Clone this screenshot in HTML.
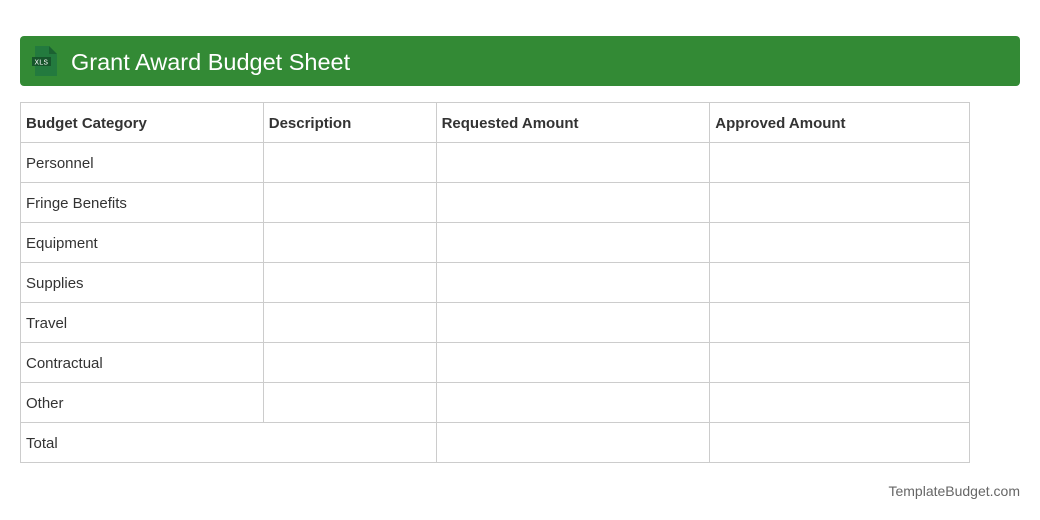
<!DOCTYPE html>
<html><head><style>
body{margin:0;width:1040px;height:520px;background:#fff;font-family:"Liberation Sans",Roboto,sans-serif;position:relative;overflow:hidden}
.hdr{position:absolute;left:20px;top:36px;width:1000px;height:50px;background:#338a35;border-radius:4px}
.hdr .t{position:absolute;left:51px;top:12px;color:#fff;font-size:23.5px;line-height:28px}
table{position:absolute;left:20px;top:102px;border-collapse:collapse;width:950px;font-size:15px;color:#333}
td{border:1px solid #ccc;height:40px;padding:2px 0 0 5px;box-sizing:border-box}
tr:first-child td{font-weight:bold}
.ft{position:absolute;right:20px;top:483px;font-size:14px;color:#666}
</style></head><body>
<div class="hdr">
<svg style="position:absolute;left:10px;top:9px" width="32" height="32" viewBox="0 0 32 32">
<path d="M5 1h14l8 8v22H5z" fill="#237a3e"/>
<path d="M19 1v8h8z" fill="#1b6231"/>
<rect x="2" y="12" width="19" height="9" fill="#16552b"/>
<text x="4.5" y="19.5" font-size="7.5" fill="#fff" font-family="Liberation Mono,monospace">XLS</text>
</svg>
<div class="t">Grant Award Budget Sheet</div>
</div>
<table>
<colgroup><col style="width:243px"><col style="width:173px"><col style="width:274px"><col style="width:260px"></colgroup>
<tr><td>Budget Category</td><td>Description</td><td>Requested Amount</td><td>Approved Amount</td></tr>
<tr><td>Personnel</td><td></td><td></td><td></td></tr>
<tr><td>Fringe Benefits</td><td></td><td></td><td></td></tr>
<tr><td>Equipment</td><td></td><td></td><td></td></tr>
<tr><td>Supplies</td><td></td><td></td><td></td></tr>
<tr><td>Travel</td><td></td><td></td><td></td></tr>
<tr><td>Contractual</td><td></td><td></td><td></td></tr>
<tr><td>Other</td><td></td><td></td><td></td></tr>
<tr><td colspan="2">Total</td><td></td><td></td></tr>
</table>
<div class="ft">TemplateBudget.com</div>
</body></html>
